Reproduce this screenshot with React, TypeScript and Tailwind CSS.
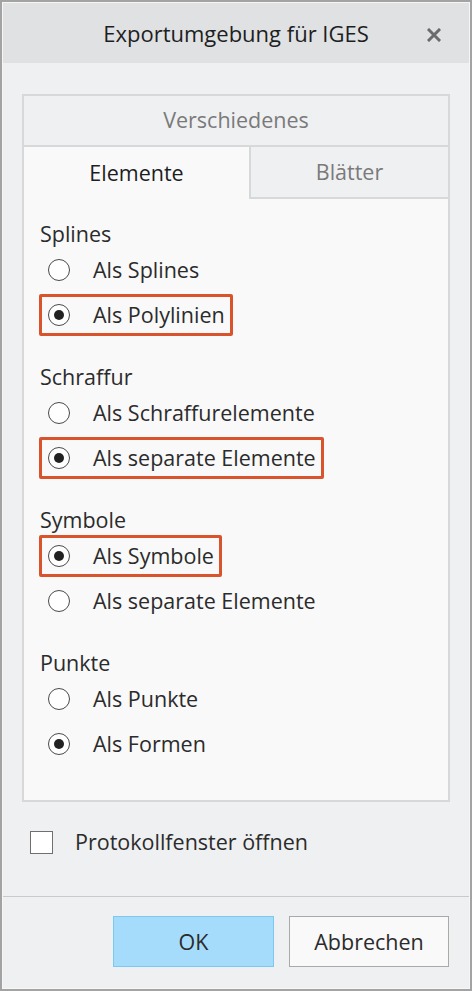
import React from 'react';

const font = { fontFamily: '"Open Sans", "Noto Sans", sans-serif' };

function Radio({ checked }: { checked?: boolean }) {
  return (
    <span className="flex h-[22px] w-[22px] shrink-0 items-center justify-center rounded-full border-[1.5px] border-[#4a4a4a] bg-white">
      {checked && <span className="h-[10px] w-[10px] rounded-full bg-[#222]" />}
    </span>
  );
}

function Option({ label, checked, marked }: { label: string; checked?: boolean; marked?: boolean }) {
  return (
    <div className="flex h-[45px] items-center">
      <div
        className={`ml-[15px] flex h-[42px] items-center gap-[23px] rounded-[2px] border-[3px] pl-[6px] pr-[5px] ${
          marked ? 'border-[#d9542c]' : 'border-transparent'
        }`}
      >
        <Radio checked={checked} />
        <span className="text-[21.5px] leading-none text-[#2b2b2b]">{label}</span>
      </div>
    </div>
  );
}

function Group({ title, children }: { title: string; children: React.ReactNode }) {
  return (
    <div className="mb-[28px]">
      <div className="ml-[16px] h-[24px] text-[21.5px] leading-[24px] text-[#2b2b2b]">{title}</div>
      <div className="mt-[1px]">{children}</div>
    </div>
  );
}

export default function App() {
  return (
    <div className="h-[991px] w-[472px] bg-[#a3a3a3] p-[2px]" style={font}>
      <div className="flex h-full flex-col border border-[#f6f6f6] bg-[#eff0f2]">
        {/* Title bar */}
        <div className="relative flex h-[60px] shrink-0 items-center justify-center bg-[#dfe1e3]">
          <span className="text-[22px] text-[#1e1e1e]">Exportumgebung für IGES</span>
          <svg className="absolute right-[28px] top-[25px]" width="14" height="14" viewBox="0 0 14 14">
            <path d="M2 2 L12 12 M12 2 L2 12" stroke="#6b6b6b" strokeWidth="3" strokeLinecap="square" />
          </svg>
        </div>

        {/* Tab box */}
        <div className="mx-[19px] mt-[31px] flex h-[708px] flex-col border-2 border-[#d6d8da] bg-[#f9f9fa]">
          <div className="flex h-[51px] shrink-0 items-center justify-center border-b-2 border-[#d6d8da] bg-[#eff0f2] text-[21.5px] text-[#7a7a7a]">
            Verschiedenes
          </div>
          <div className="flex h-[52px] shrink-0">
            <div className="flex w-[225px] items-center justify-center bg-[#f9f9fa] text-[21.5px] text-[#1e1e1e]">
              Elemente
            </div>
            <div className="flex flex-1 items-center justify-center border-b-2 border-l-2 border-[#d6d8da] bg-[#eff0f2] text-[21.5px] text-[#7a7a7a]">
              Blätter
            </div>
          </div>

          <div className="pt-[23px]">
            <Group title="Splines">
              <Option label="Als Splines" />
              <Option label="Als Polylinien" checked marked />
            </Group>
            <Group title="Schraffur">
              <Option label="Als Schraffurelemente" />
              <Option label="Als separate Elemente" checked marked />
            </Group>
            <Group title="Symbole">
              <Option label="Als Symbole" checked marked />
              <Option label="Als separate Elemente" />
            </Group>
            <Group title="Punkte">
              <Option label="Als Punkte" />
              <Option label="Als Formen" checked />
            </Group>
          </div>
        </div>

        {/* Checkbox */}
        <div className="mt-[24px] flex items-center pl-[27px]">
          <span className="h-[23px] w-[23px] border-[1.5px] border-[#6f6f6f] bg-white" />
          <span className="ml-[22px] text-[21.5px] text-[#2b2b2b]">Protokollfenster öffnen</span>
        </div>

        <div className="mt-[38px] h-px bg-[#c9cacc]" />

        {/* Buttons */}
        <div className="mt-[19px] flex justify-end gap-[15px] pr-[20px]">
          <button className="h-[51px] w-[161px] border border-[#7cc8f3] bg-[#a6dcfb] text-[21.5px] text-[#2b2b2b]">
            OK
          </button>
          <button className="h-[51px] w-[160px] border border-[#a9a9a9] bg-[#f9f9f9] text-[21.5px] text-[#2b2b2b]">
            Abbrechen
          </button>
        </div>
      </div>
    </div>
  );
}
